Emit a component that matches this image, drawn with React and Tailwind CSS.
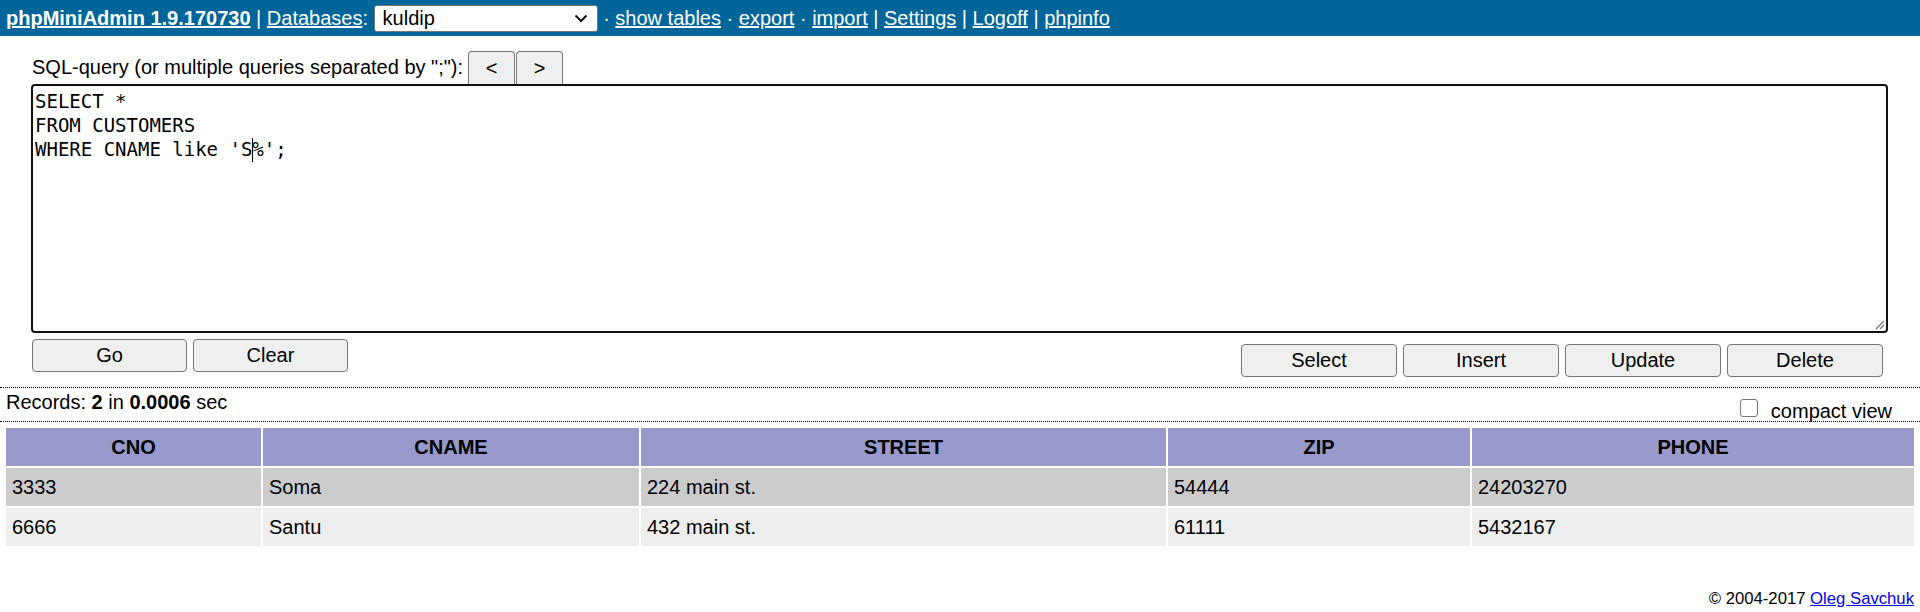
export default function App() {
  const sans = "font-['Liberation_Sans',Arial,sans-serif]";
  const btn =
    "h-[33px] bg-[#efefef] border border-[#767676] rounded-[4px] text-[20px] leading-[23px] text-black flex items-center justify-center";
  const cols = ["CNO", "CNAME", "STREET", "ZIP", "PHONE"];
  const widths = ["w-[255px]", "w-[376px]", "w-[525px]", "w-[302px]", ""];
  const rows = [
    ["3333", "Soma", "224 main st.", "54444", "24203270"],
    ["6666", "Santu", "432 main st.", "61111", "5432167"],
  ];
  return (
    <div className={`${sans} bg-white text-black w-[1920px] h-[612px] overflow-hidden`}>
      {/* Header */}
      <div className="h-[36px] bg-[#006699] flex items-center px-[6px] text-white text-[20px] leading-[23px] whitespace-pre">
        <a className="font-bold underline">phpMiniAdmin 1.9.170730</a>
        <span> | </span>
        <a className="underline">Databases</a>
        <span>: </span>
        <div className="w-[224px] h-[27px] bg-white border border-[#767676] rounded-[3px] flex items-center justify-between pl-[8px] pr-[8px] text-black">
          <span>kuldip</span>
          <svg width="14" height="9" viewBox="0 0 14 9" className="mr-[1px]">
            <path d="M1.5 1.5 L7 7 L12.5 1.5" fill="none" stroke="#111" strokeWidth="2" />
          </svg>
        </div>
        <span> · </span>
        <a className="underline">show tables</a>
        <span> · </span>
        <a className="underline">export</a>
        <span> · </span>
        <a className="underline">import</a>
        <span> | </span>
        <a className="underline">Settings</a>
        <span> | </span>
        <a className="underline">Logoff</a>
        <span> | </span>
        <a className="underline">phpinfo</a>
      </div>

      {/* Query form */}
      <div className="pt-[15px] pl-[31px] pr-[32px]">
        <div className="flex items-center h-[33px] text-[20px] leading-[23px]">
          <span className="ml-[1px] mr-[5px]">SQL-query (or multiple queries separated by ";"):</span>
          <div className="w-[47px] h-[33px] bg-[#efefef] border border-b-0 border-[#767676] rounded-t-[4px] flex items-center justify-center text-[20px]">
            &lt;
          </div>
          <div className="ml-[1px] w-[47px] h-[33px] bg-[#efefef] border border-b-0 border-[#767676] rounded-t-[4px] flex items-center justify-center text-[20px]">
            &gt;
          </div>
        </div>
        <div className="relative h-[249px] border-2 border-[#101010] rounded-[4px] px-[2px] pt-[3px] font-['DejaVu_Sans_Mono',monospace] text-[19px] leading-[24px] whitespace-pre text-black">
          <div>SELECT *</div>
          <div>FROM CUSTOMERS</div>
          <div>
            WHERE CNAME like 'S
            <span className="inline-block w-px h-[24px] bg-black align-[-6px] -mr-px"></span>
            %';
          </div>
          <svg width="11" height="11" viewBox="0 0 11 11" className="absolute right-[1px] bottom-[1px]">
            <path d="M10 2 L2 10 M10 6 L6 10" stroke="#777" strokeWidth="1.2" fill="none" />
          </svg>
        </div>
        <div className="mt-[6px] pb-[10px] flex justify-between items-start">
          <div className="flex gap-[6px] ml-[1px]">
            <div className={`${btn} w-[155px]`}>Go</div>
            <div className={`${btn} w-[155px]`}>Clear</div>
          </div>
          <div className="flex gap-[6px] mt-[5px] mr-[5px]">
            <div className={`${btn} w-[156px]`}>Select</div>
            <div className={`${btn} w-[156px]`}>Insert</div>
            <div className={`${btn} w-[156px]`}>Update</div>
            <div className={`${btn} w-[156px]`}>Delete</div>
          </div>
        </div>
      </div>

      {/* Records bar */}
      <div className="h-[35px] border-y border-dotted border-black flex justify-between items-start px-[6px] text-[20px] leading-[23px]">
        <div className="pt-[3px]">
          Records: <b>2</b> in <b>0.0006</b> sec
        </div>
        <div className="pt-[11px] flex items-start mr-[22px]">
          <div className="w-[18px] h-[18px] border border-[#767676] rounded-[3px] bg-white mr-[13px]"></div>
          <span className="mt-[1px]">compact view</span>
        </div>
      </div>

      {/* Results table */}
      <div className="pt-[4px] px-[4px]">
        <table className="w-full table-fixed border-separate border-spacing-[2px] text-[20px] leading-[23px]">
          <thead>
            <tr>
              {cols.map((c, i) => (
                <th key={c} className={`${widths[i]} h-[38px] bg-[#9999cc] font-bold text-center p-0`}>
                  {c}
                </th>
              ))}
            </tr>
          </thead>
          <tbody>
            {rows.map((r, ri) => (
              <tr key={ri}>
                {r.map((v, ci) => (
                  <td
                    key={ci}
                    className={`h-[38px] px-[6px] py-0 text-left ${ri === 0 ? "bg-[#cccccc]" : "bg-[#eeeeee]"}`}
                  >
                    {v}
                  </td>
                ))}
              </tr>
            ))}
          </tbody>
        </table>
      </div>

      {/* Footer */}
      <div className="mt-[41px] pr-[6px] text-right text-[16.7px] leading-[19px]">
        © 2004-2017 <a className="text-[#0000ee] underline">Oleg Savchuk</a>
      </div>
    </div>
  );
}
